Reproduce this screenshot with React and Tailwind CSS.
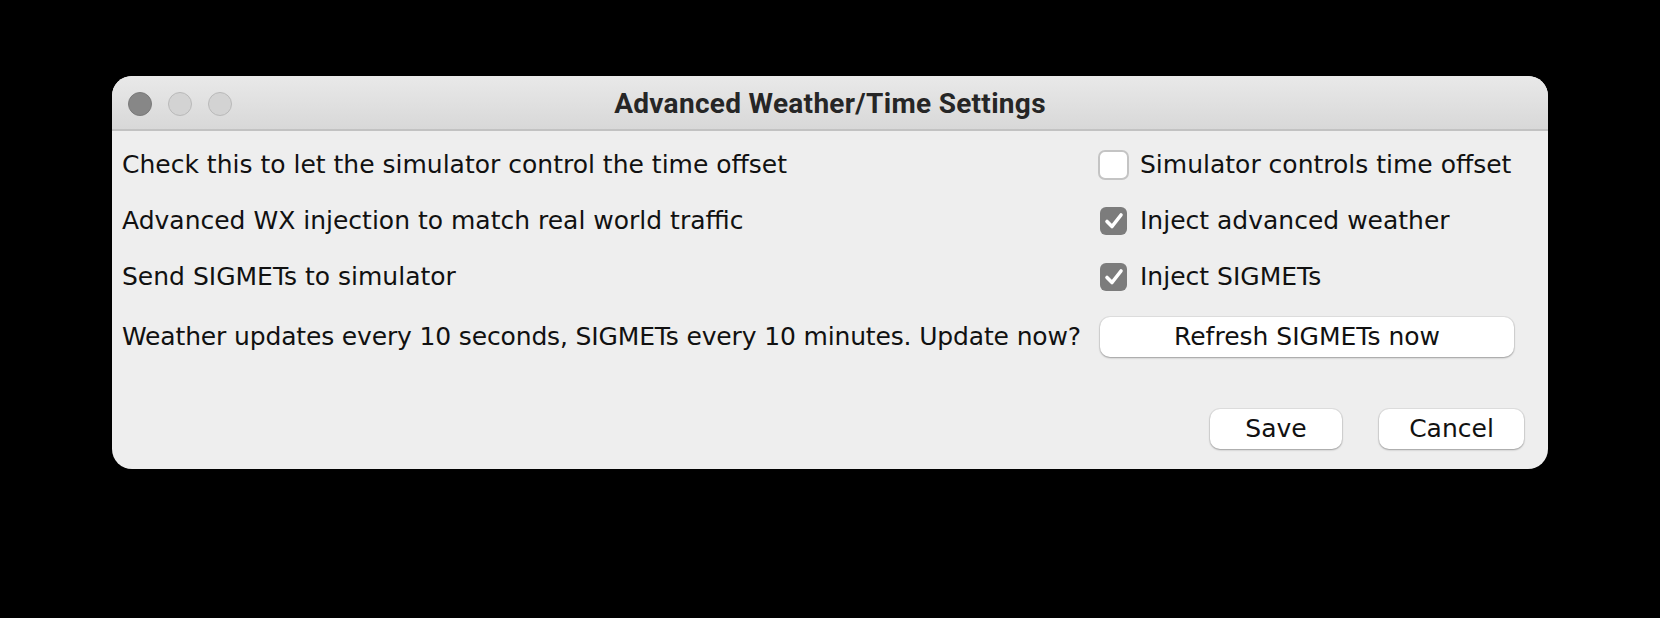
import React from "react";

const textFont = { fontFamily: '"DejaVu Sans", "Liberation Sans", sans-serif' };

const Check = ({ checked }) => (
  <div className="w-[31px] h-[31px] flex items-center justify-center shrink-0">
    {checked ? (
      <div className="w-[27px] h-[28px] rounded-[6px] bg-[#7c7c7c] flex items-center justify-center">
        <svg width="20" height="18" viewBox="0 0 20 18" fill="none">
          <path d="M3 9.5 L8 14.5 L17 3" stroke="white" strokeWidth="3.6" strokeLinecap="round" strokeLinejoin="round" />
        </svg>
      </div>
    ) : (
      <div className="w-[31px] h-[30px] rounded-[7px] bg-white border-2 border-[#c4c4c4]" />
    )}
  </div>
);

const Button = ({ children, className }) => (
  <button
    className={`h-[40px] rounded-[10px] bg-white text-[25px] text-[#111] shadow-[0_0_0_1px_rgba(0,0,0,0.06),0_1px_2px_rgba(0,0,0,0.3)] ${className}`}
    style={textFont}
  >
    {children}
  </button>
);

const rows = [
  { label: "Check this to let the simulator control the time offset", control: "Simulator controls time offset", checked: false },
  { label: "Advanced WX injection to match real world traffic", control: "Inject advanced weather", checked: true },
  { label: "Send SIGMETs to simulator", control: "Inject SIGMETs", checked: true },
];

export default function App() {
  return (
    <div className="w-[1660px] h-[618px] bg-black pl-[112px] pt-[76px]">
      <div className="w-[1436px] h-[393px] rounded-[20px] bg-[#eeeeee] overflow-hidden flex flex-col">
        {/* title bar */}
        <div className="h-[55px] shrink-0 grid grid-cols-[1fr_auto_1fr] items-center bg-gradient-to-b from-[#e9e9e9] to-[#d8d8d8] border-b-2 border-[#c2c2c2]">
          <div className="flex items-center gap-[16px] pl-[16px] pt-[2px]">
            <div className="w-[24px] h-[24px] rounded-full bg-[#878787] border border-[#7a7a7a]" />
            <div className="w-[24px] h-[24px] rounded-full bg-[#d3d3d3] border border-[#b9b9b9]" />
            <div className="w-[24px] h-[24px] rounded-full bg-[#d3d3d3] border border-[#b9b9b9]" />
          </div>
          <div
            className="text-[28px] font-bold tracking-[0.3px] text-[#262626] pt-[2px]"
            style={{ fontFamily: 'Roboto, "Liberation Sans", sans-serif' }}
          >
            Advanced Weather/Time Settings
          </div>
          <div />
        </div>

        {/* body */}
        <div className="flex flex-col pt-[6px] pl-[10px] text-[25px] text-[#111]" style={textFont}>
          {rows.map((r) => (
            <div key={r.label} className="h-[56px] grid grid-cols-[976px_1fr] items-center">
              <span>{r.label}</span>
              <div className="flex items-center gap-[11px]">
                <Check checked={r.checked} />
                <span>{r.control}</span>
              </div>
            </div>
          ))}
          <div className="h-[64px] grid grid-cols-[976px_1fr] items-center">
            <span className="tracking-[-0.15px]">Weather updates every 10 seconds, SIGMETs every 10 minutes. Update now?</span>
            <div className="pl-[2px]">
              <Button className="w-[414px]">Refresh SIGMETs now</Button>
            </div>
          </div>
          <div className="mt-[40px] flex justify-end gap-[37px] pr-[24px]">
            <Button className="w-[132px]">Save</Button>
            <Button className="w-[145px]">Cancel</Button>
          </div>
        </div>
      </div>
    </div>
  );
}
